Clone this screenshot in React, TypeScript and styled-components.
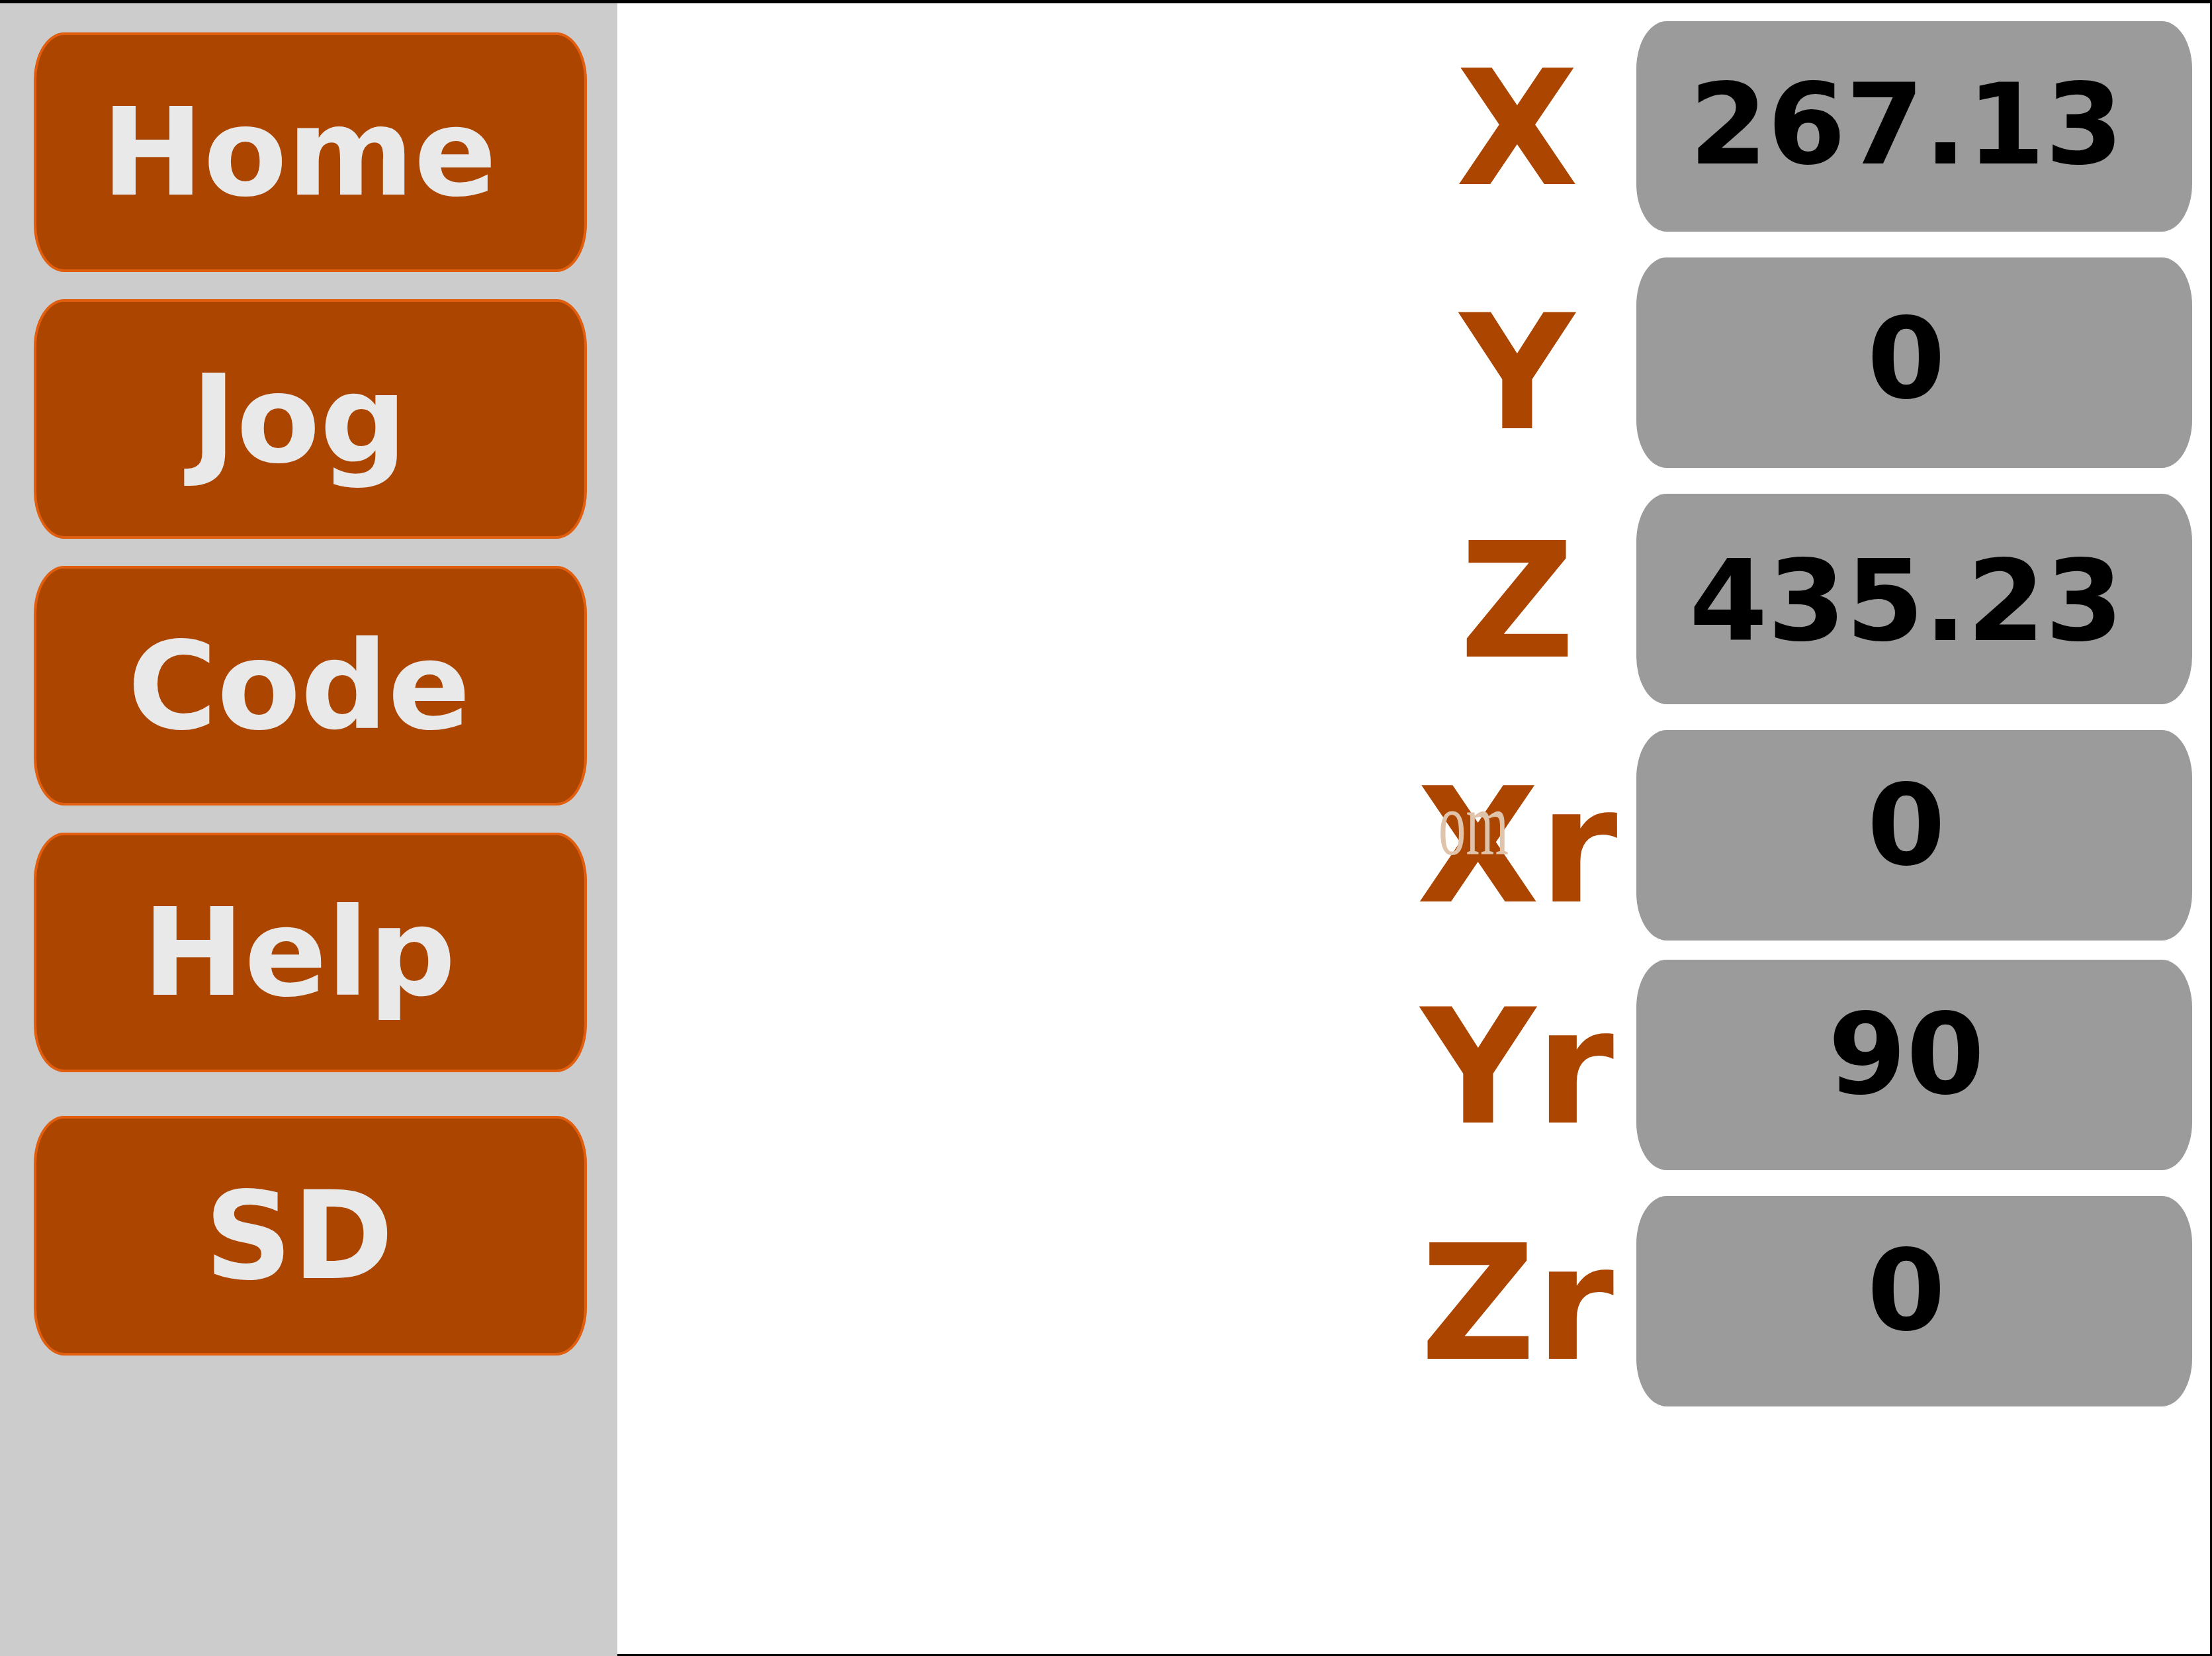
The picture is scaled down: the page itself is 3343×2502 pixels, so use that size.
import React from "react";
import styled, { createGlobalStyle } from "styled-components";

const GlobalStyle = createGlobalStyle`
    html, body {
        margin: 0;
        padding: 0;
        background: #ffffff;
    }

    body {
        font-family: "DejaVu Sans", Verdana, sans-serif;
    }
`;

const Screen = styled.div`
    display: flex;
    width: 3343px;
    height: 2502px;
    box-sizing: border-box;
    border-top: 5px solid #000000;
    overflow: hidden;
`;

const Sidebar = styled.nav`
    display: flex;
    flex-direction: column;
    gap: 41px;
    width: 933px;
    flex-shrink: 0;
    box-sizing: border-box;
    padding: 44px 0 0 51px;
    background: #cccccc;
`;

const MenuButton = styled.button<{ $extraGap?: number }>`
    display: flex;
    align-items: center;
    justify-content: center;
    width: 836px;
    height: 362px;
    margin-top: ${props => props.$extraGap ?? 0}px;
    box-sizing: border-box;
    padding: 0 34px 0 0;
    border: 4px solid #e05e0e;
    border-radius: 46px / 72px;
    background: #ab4500;
    color: #e9e9e9;
    font-family: "DejaVu Sans", Verdana, sans-serif;
    font-weight: bold;
    font-size: 184px;
    line-height: 1;
    cursor: pointer;
`;

const Readout = styled.main`
    flex: 1;
    display: flex;
    flex-direction: column;
    align-items: flex-end;
    gap: 39px;
    box-sizing: border-box;
    padding: 27px 27px 0 0;
    border-right: 3px solid #000000;
    border-bottom: 3px solid #000000;
    background: #ffffff;
`;

const AxisRow = styled.div<{ $pull?: number }>`
    position: relative;
    display: flex;
    align-items: center;
    margin-top: ${props => -(props.$pull ?? 0)}px;
`;

const AxisName = styled.div<{ $drop?: number }>`
    width: 360px;
    box-sizing: border-box;
    padding-top: ${props => (4 + (props.$drop ?? 0)) * 2}px;
    text-align: center;
    color: #ab4500;
    font-weight: bold;
    font-size: 240px;
    line-height: 1;
`;

// shift > 0 lifts the number above the middle of the box
const ValueBox = styled.div<{ $shift?: number }>`
    display: flex;
    align-items: center;
    justify-content: center;
    width: 840px;
    height: 318px;
    box-sizing: border-box;
    padding-right: 24px;
    padding-bottom: ${props => Math.max(0, (props.$shift ?? 0) * 2)}px;
    padding-top: ${props => Math.max(0, -(props.$shift ?? 0) * 2)}px;
    border-radius: 46px / 72px;
    background: #9b9b9b;
    color: #000000;
    font-weight: bold;
    font-size: 170px;
    line-height: 1;
`;

// leftover caption peeking out over the Xr label
const Ghost = styled.span`
    position: absolute;
    left: 64px;
    top: 90px;
    width: 104px;
    height: 104px;
    overflow: hidden;
    font-family: "Liberation Serif", "Times New Roman", serif;
    font-size: 138px;
    line-height: 104px;
    color: #e0c3ab;
    pointer-events: none;
`;

const GhostText = styled.span`
    display: inline-block;
    margin-left: -3px;
    transform: scaleX(0.6);
    transform-origin: left center;
    white-space: nowrap;
`;

const menu = [
    { label: "Home" },
    { label: "Jog" },
    { label: "Code" },
    { label: "Help" },
    { label: "SD", extraGap: 25 },
];

const axes = [
    { name: "X", value: "267.13", shift: 3 },
    { name: "Y", value: "0", drop: 12, shift: 6 },
    { name: "Z", value: "435.23", shift: -3 },
    { name: "Xr", value: "0", drop: 13, shift: 15, ghost: "om" },
    { name: "Yr", value: "90", pull: 10, shift: 16 },
    { name: "Zr", value: "0", shift: 16 },
];

const App = () => (
    <>
        <GlobalStyle />
        <Screen>
            <Sidebar>
                {menu.map(item => (
                    <MenuButton key={item.label} type="button" $extraGap={item.extraGap}>
                        {item.label}
                    </MenuButton>
                ))}
            </Sidebar>
            <Readout>
                {axes.map(axis => (
                    <AxisRow key={axis.name} $pull={axis.pull}>
                        <AxisName $drop={axis.drop}>{axis.name}</AxisName>
                        <ValueBox $shift={axis.shift}>{axis.value}</ValueBox>
                        {axis.ghost && (
                            <Ghost>
                                <GhostText>{axis.ghost}</GhostText>
                            </Ghost>
                        )}
                    </AxisRow>
                ))}
            </Readout>
        </Screen>
    </>
);

export default App;
